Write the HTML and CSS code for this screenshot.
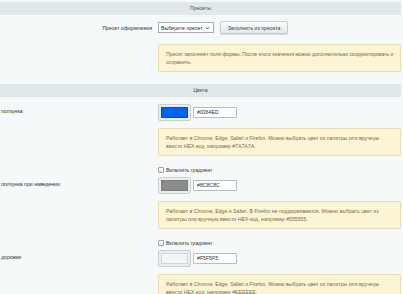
FILE: index.html
```html
<!DOCTYPE html>
<html lang="ru">
<head>
  <meta charset="UTF-8">
  <title>Настройки слайдера</title>
  <link rel="stylesheet" href="styles.css">
</head>
<body>
<div class="form">
  <div class="heading first">Пресеты</div>

  <div class="row preset-row">
    <div class="label label-right">Пресет оформления</div>
    <div class="field">
      <div class="select">
        <span>Выберите пресет</span>
        <svg class="arrow" width="5" height="4" viewBox="0 0 5 4"><path d="M0.8 1.2 L2.5 2.9 L4.2 1.2" fill="none" stroke="#333" stroke-width="0.9"/></svg>
      </div>
      <button class="btn">Заполнить из пресета</button>
    </div>
  </div>

  <div class="note note-first">Пресет заполняет поля формы. После этого значения можно дополнительно скорректировать и сохранить.</div>

  <div class="heading second">Цвета</div>

  <div class="row color-row first-color">
    <div class="label">ползунка</div>
    <div class="field">
      <span class="swatch"><span class="fill blue"></span></span>
      <span class="hex">#0364ED</span>
    </div>
  </div>
  <div class="note">Работает в Chrome, Edge, Safari и Firefox. Можно выбрать цвет из палитры или вручную ввести HEX-код, например #7A7A7A.</div>

  <div class="check"><span class="box"></span>Включить градиент</div>
  <div class="row color-row">
    <div class="label">ползунка при наведении</div>
    <div class="field">
      <span class="swatch"><span class="fill gray"></span></span>
      <span class="hex">#8C8C8C</span>
    </div>
  </div>
  <div class="note">Работает в Chrome, Edge и Safari. В Firefox не поддерживается. Можно выбрать цвет из палитры или вручную ввести HEX-код, например #555555.</div>

  <div class="check"><span class="box"></span>Включить градиент</div>
  <div class="row color-row">
    <div class="label">дорожки</div>
    <div class="field">
      <span class="swatch"><span class="fill light"></span></span>
      <span class="hex">#F5F5F5</span>
    </div>
  </div>
  <div class="note">Работает в Chrome, Edge, Safari и Firefox. Можно выбрать цвет из палитры или вручную ввести HEX-код, например #EEEEEE.</div>
</div>
</body>
</html>
```

FILE: styles.css
```css
body {
  margin: 0;
  background: #f5f9f9;
  font-family: "Liberation Sans", Arial, sans-serif;
  font-size: 5.2px;
  color: #2f3537;
  overflow: hidden;
}
.form {
  padding-top: 2px;
}
.heading {
  height: 13px;
  line-height: 13px;
  background: #e0e8ea;
  text-align: center;
  color: #3f4b4e;
  margin-right: 2px;
}
.heading.second {
  margin-top: 12px;
}
.row {
  display: grid;
  grid-template-columns: 158px 1fr;
  align-items: center;
}
.label {
  padding-left: 1px;
  padding-bottom: 4px;
  white-space: nowrap;
}
.label-right {
  text-align: right;
  padding-right: 6px;
  padding-bottom: 0;
}
.field {
  display: flex;
  align-items: center;
}
.preset-row {
  margin-top: 6px;
  height: 13px;
}
.select {
  width: 56px;
  height: 11px;
  box-sizing: border-box;
  border: 1px solid #a4acb0;
  background: #fff;
  display: flex;
  align-items: center;
  justify-content: space-between;
  padding: 0 3px 0 2px;
  color: #2a2f31;
  white-space: nowrap;
}
.btn {
  margin-left: 6px;
  height: 13px;
  width: 68px;
  padding: 0;
  border: 1px solid #c2cbcd;
  border-radius: 2px;
  background: linear-gradient(#fbfcfc, #e2e9eb);
  box-shadow: 0 1px 0 #d6dde0;
  font-family: inherit;
  font-size: 5.2px;
  color: #3a4447;
  white-space: nowrap;
}
.note {
  margin: 7px 2px 0 158px;
  padding: 5px 7px 5px;
  border: 1px solid #e6ddb2;
  border-radius: 2px;
  background: #fbf5d6;
  color: #7a6c46;
  line-height: 8px;
}
.note-first {
  margin-top: 10px;
  padding-right: 1px;
  letter-spacing: -0.05px;
}
.color-row.first-color {
  margin-top: 7px;
}
.swatch {
  width: 33px;
  height: 17px;
  box-sizing: border-box;
  border: 1px solid #c7cfd2;
  border-radius: 2px;
  background: #e9eef0;
  padding: 2px;
  display: flex;
}
.fill {
  flex: 1;
  border: 1px solid #b8bfc2;
}
.fill.blue {
  background: #0364ed;
  border-color: #0a4fb8;
}
.fill.gray {
  background: #8c8c8c;
  border-color: #7d7d7d;
}
.fill.light {
  background: #f5f5f5;
  border-color: #d2d6d8;
}
.hex {
  margin-left: 2px;
  width: 44px;
  height: 11px;
  box-sizing: border-box;
  border: 1px solid #b5bdc0;
  border-radius: 1px;
  background: #fff;
  padding-left: 3px;
  line-height: 9px;
  color: #2a2f31;
}
.check {
  margin: 10px 0 0 158px;
  height: 8px;
  display: flex;
  align-items: center;
  color: #2f3537;
}
.check + .color-row {
  margin-top: 3px;
}
.box {
  width: 6px;
  height: 6px;
  box-sizing: border-box;
  border: 1px solid #9aa3a7;
  border-radius: 1px;
  background: linear-gradient(#ffffff, #dfe5e7);
  margin-right: 2px;
}
```
